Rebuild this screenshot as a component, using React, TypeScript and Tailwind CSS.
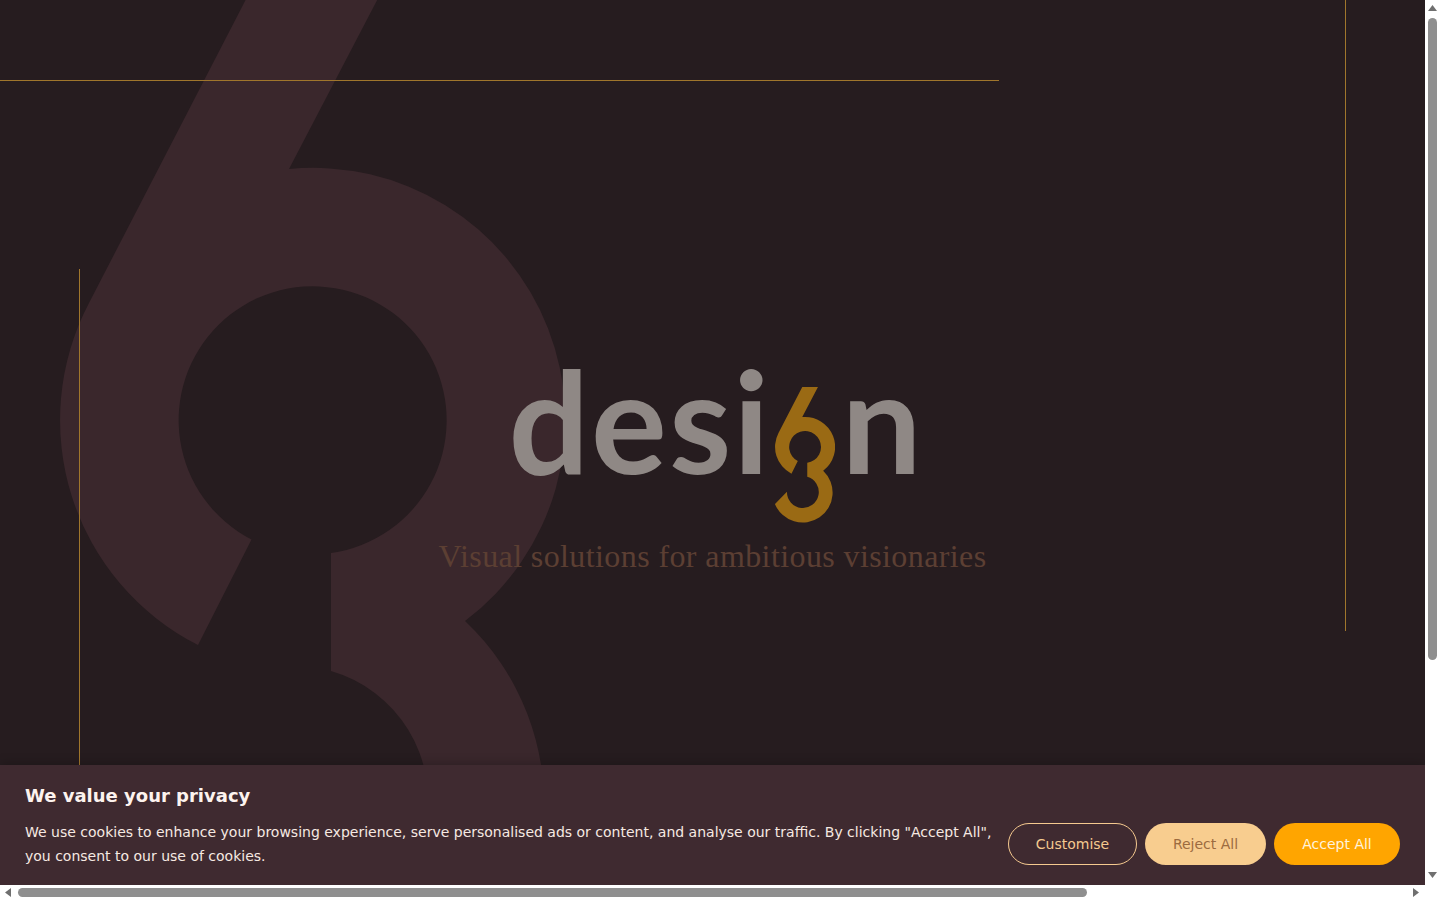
const MARK_PATH =
  "M289 -84L421 -84L289 169A252 252 0 0 1 465 621A252 252 0 1 1 59 900L160 798A134 134 0 1 0 331 671L331 553A134 134 0 1 0 251.5 539.5L198 645A252 252 0 0 1 89 303Z";

function Mark({ className, fill }: { className: string; fill: string }) {
  return (
    <svg className={className} viewBox="60 -84 504 1144" fill={fill} aria-hidden="true">
      <path d={MARK_PATH} />
    </svg>
  );
}

function CookieBanner() {
  return (
    <div className="absolute bottom-0 left-0 right-0 z-10 bg-[#3f2a30] px-[25px] pt-[19px] pb-[17px] shadow-[0_-2px_10px_rgba(0,0,0,0.2)] font-['DejaVu_Sans',sans-serif]">
      <h2 className="text-[18px] leading-[24px] font-bold text-[#fdf3ee]">We value your privacy</h2>
      <div className="mt-[12px] flex items-center gap-4">
        <p className="flex-1 text-sm leading-[24px] text-[#f6e9e2]">
          We use cookies to enhance your browsing experience, serve personalised ads or content, and
          analyse our traffic. By clicking "Accept All", you consent to our use of cookies.
        </p>
        <div className="flex shrink-0 gap-2 text-sm">
          <button className="h-[42px] w-[129px] rounded-[21px] border border-[#f5c98f] text-[#f5c98f]">Customise</button>
          <button className="h-[42px] w-[121px] rounded-[21px] bg-[#f8cd8f] text-[#9c6b3f]">Reject All</button>
          <button className="h-[42px] w-[126px] rounded-[21px] bg-[#ffa500] text-[#fff3dc]">Accept All</button>
        </div>
      </div>
    </div>
  );
}

function Arrow({ dir }: { dir: "up" | "down" | "left" | "right" }) {
  const points = {
    up: "4.5,0 9,6 0,6",
    down: "0,0 9,0 4.5,6",
    left: "6,0 6,9 0,4.5",
    right: "0,0 6,4.5 0,9",
  }[dir];
  const size = dir === "up" || dir === "down" ? "h-[6px] w-[9px]" : "h-[9px] w-[6px]";
  return (
    <svg className={size} viewBox={dir === "up" || dir === "down" ? "0 0 9 6" : "0 0 6 9"} fill="#6f6f6f">
      <polygon points={points} />
    </svg>
  );
}

export default function App() {
  return (
    <div className="flex h-screen w-screen flex-col overflow-hidden bg-white">
      <div className="flex min-h-0 flex-1">
        <div className="relative flex-1 overflow-hidden bg-[#261c1f]">
          <Mark className="absolute left-[60px] top-[-84px] h-[1144px] w-[504px]" fill="#3a272c" />
          <div className="absolute left-0 top-[80px] h-px w-[999px] bg-[#a0762c]" />
          <div className="absolute left-[79px] top-[269px] h-[731px] w-px bg-[#a0762c]" />
          <div className="absolute left-[1345px] top-0 h-[631px] w-px bg-[#a0762c]" />

          <main className="relative flex flex-col items-center pt-[367px]">
            <div className="flex h-[155px] items-start pl-[5px] font-['Lato',sans-serif] text-[142px] leading-[104px] font-bold text-[#8f8885]">
              <span className="tracking-[2px]">desi</span>
              <Mark className="ml-[4px] mr-[6px] mt-[20px] h-[136px] w-[60px]" fill="#9a6a14" />
              <span>n</span>
            </div>
            <p className="mt-[16px] font-['Liberation_Serif',serif] text-[32px] leading-[36px] tracking-[0.4px] text-[#5c3f33]">
              Visual solutions for ambitious visionaries
            </p>
          </main>

          <CookieBanner />
        </div>
        <div className="flex w-[15px] shrink-0 flex-col items-center pt-[5px] pb-[7px]">
          <Arrow dir="up" />
          <div className="mt-[7px] h-[642px] w-[9px] rounded-full bg-[#8f8f8f]" />
          <div className="flex-1" />
          <Arrow dir="down" />
        </div>
      </div>
      <div className="flex h-[15px] shrink-0 items-center pl-[5px] pr-[21px]">
        <Arrow dir="left" />
        <div className="ml-[7px] h-[9px] w-[1069px] rounded-full bg-[#8f8f8f]" />
        <div className="flex-1" />
        <Arrow dir="right" />
      </div>
    </div>
  );
}
